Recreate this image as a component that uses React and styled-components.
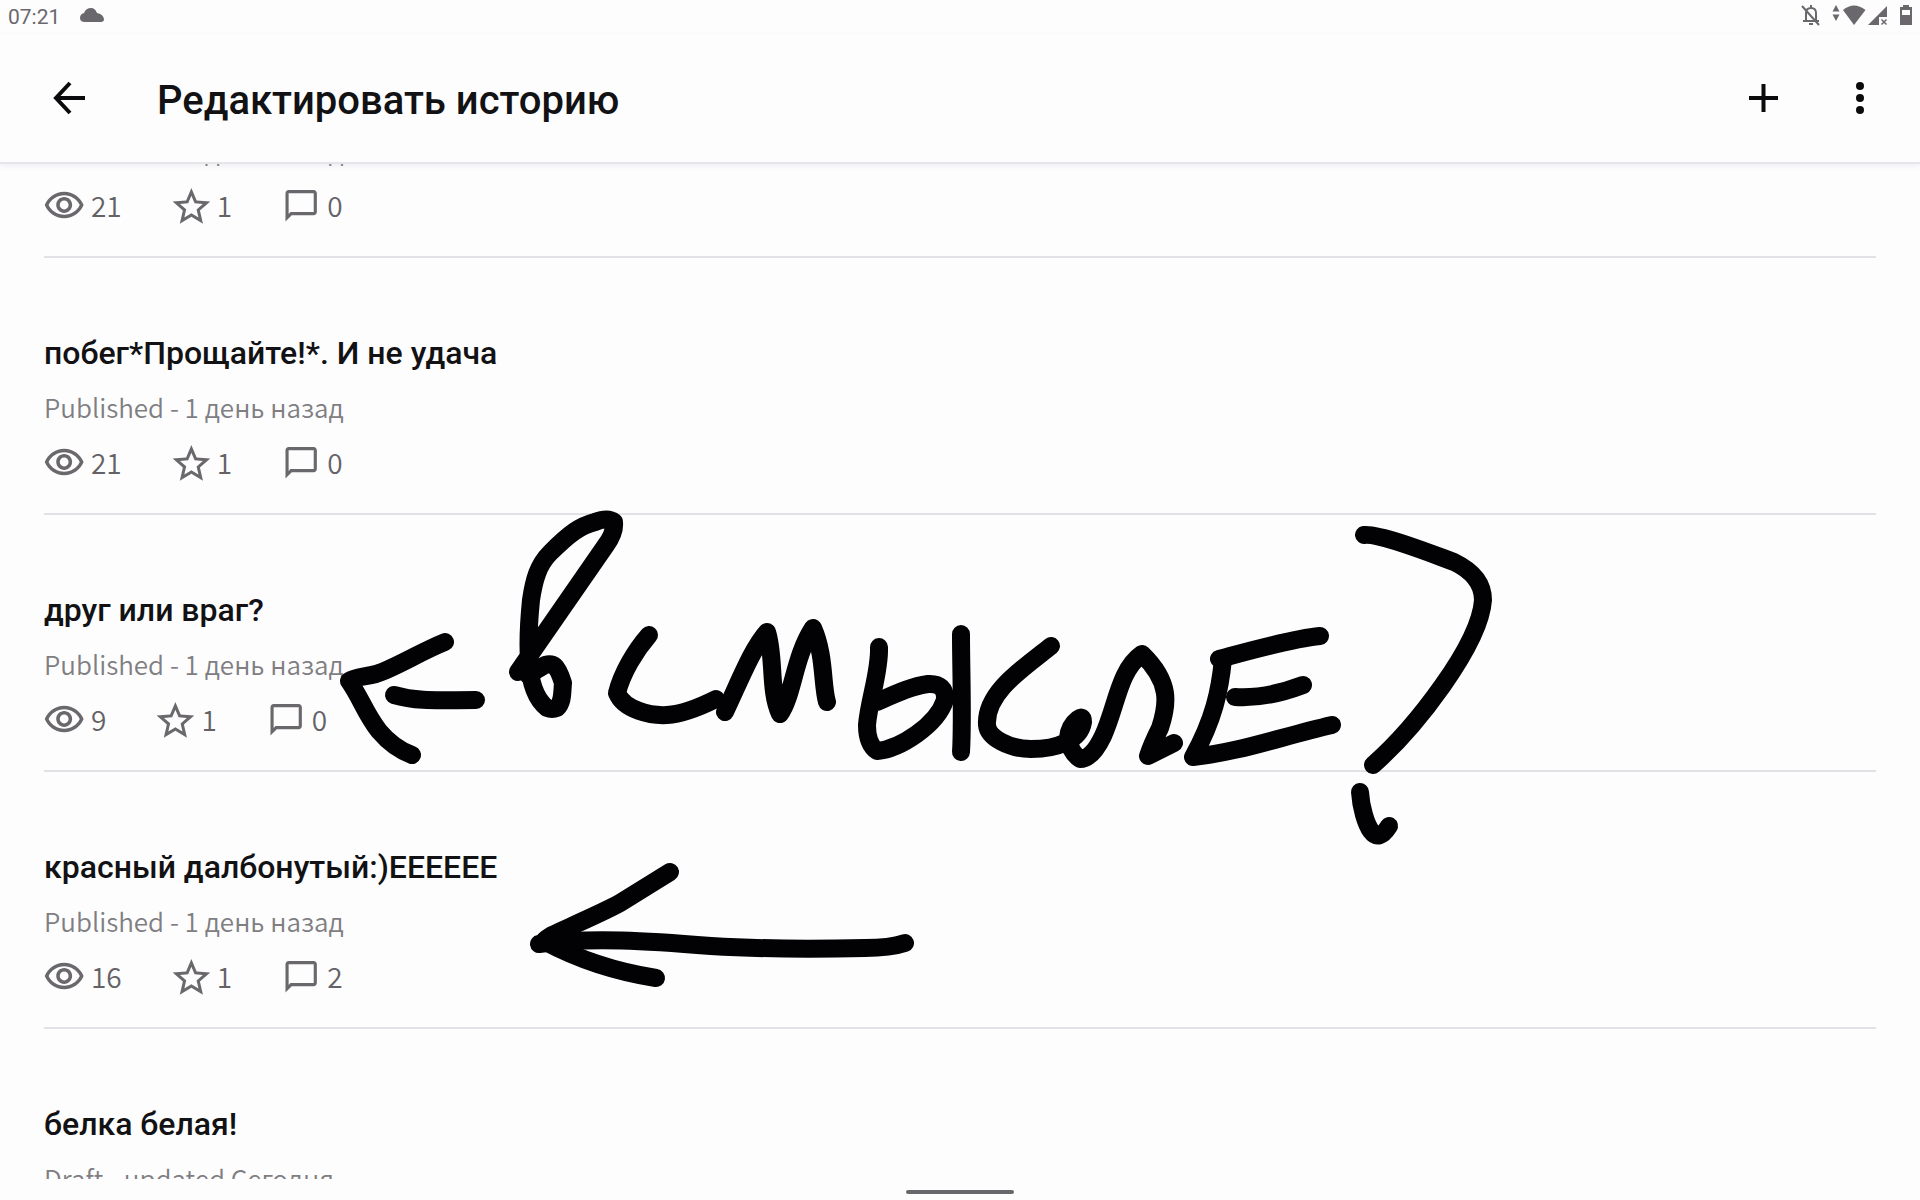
import React from 'react';
import styled, { createGlobalStyle } from 'styled-components';

const GlobalStyle = createGlobalStyle`
    * {
        box-sizing: border-box;
    }

    body {
        margin: 0;
        background: #fdfdfe;
        color: #121214;
        font-family: Roboto, sans-serif;
    }
`

const Screen = styled.div`
    position: relative;
    height: 100vh;
    display: flex;
    flex-direction: column;
    overflow: hidden;
`

const StatusBar = styled.div`
    display: flex;
    align-items: center;
    height: 34px;
    flex-shrink: 0;
    padding: 0 6px 0 8px;
    font-size: 21px;
    color: #6a686c;
`

const Cloud = styled.svg`
    width: 24px;
    height: 16px;
    margin-left: 20px;
    margin-bottom: 4px;
    fill: #6a686c;
`

const StatusIcons = styled.svg`
    width: 114px;
    height: 34px;
    margin-left: auto;
    fill: #6a686c;
`

const Header = styled.header`
    display: flex;
    align-items: center;
    height: 130px;
    flex-shrink: 0;
    padding: 0 36px 0 44px;
    border-bottom: 2px solid #e6e5ea;
    box-shadow: 0 2px 6px #eeedf2;
`

const HeaderTitle = styled.h1`
    flex: 1;
    margin: 0 0 0 65px;
    padding-top: 6px;
    font-size: 40px;
    line-height: 48px;
    font-weight: 500;
`

const IconButton = styled.button`
    display: flex;
    align-items: center;
    justify-content: center;
    width: 48px;
    height: 48px;
    margin-left: ${props => props.$gap || 0}px;
    padding: 0;
    border: 0;
    background: none;
    color: #0b0b0d;
`

const List = styled.main`
    flex: 1;
    min-height: 0;
    display: flex;
    flex-direction: column;
    overflow: hidden;
    padding: 0 44px;
`

const Part = styled.article`
    display: flex;
    flex-direction: column;
    justify-content: flex-end;
    flex-shrink: 0;
    height: ${props => props.$height || 257}px;
    padding-bottom: 31px;
    border-bottom: 2px solid #e2e1e5;
`

const PartTitle = styled.h2`
    margin: 0;
    font-size: 32px;
    line-height: 40px;
    font-weight: 500;
`

const PartStatus = styled.p`
    margin: 14px 0 0;
    font-family: "Noto Sans CJK SC", sans-serif;
    font-size: 26px;
    line-height: 40px;
    font-weight: 350;
    color: #807e82;
`

const Stats = styled.div`
    display: flex;
    gap: 48px;
    margin-top: 15px;
    font-family: "Noto Sans CJK SC", sans-serif;
    font-size: 28px;
    line-height: 40px;
    font-weight: 350;
    color: #646266;
`

const Stat = styled.span`
    display: flex;
    align-items: center;
    gap: 7px;
`

const StatIcon = styled.svg`
    width: 40px;
    height: 38px;
    fill: #6a686c;
`

const Navigation = styled.footer`
    display: flex;
    justify-content: center;
    align-items: center;
    height: 21px;
    flex-shrink: 0;
    padding-top: 4px;
`

const Handle = styled.div`
    width: 108px;
    height: 4px;
    border-radius: 2px;
    background: #69676b;
`

// freehand layer lies over the list
const Doodle = styled.svg`
    position: absolute;
    top: 0;
    left: 0;
    width: 1920px;
    height: 1200px;
    pointer-events: none;
    fill: none;
    stroke: #020103;
    stroke-width: 18;
    stroke-linecap: round;
    stroke-linejoin: round;
`

// the first and the last part are scrolled half out of the list
const parts = [
    { id: 1, status: 'Published - 1 день назад', stats: [21, 1, 0], height: 94 },
    { id: 2, title: 'побег*Прощайте!*. И не удача', status: 'Published - 1 день назад', stats: [21, 1, 0] },
    { id: 3, title: 'друг или враг?', status: 'Published - 1 день назад', stats: [9, 1, 0] },
    { id: 4, title: 'красный далбонутый:)EEEEEE', status: 'Published - 1 день назад', stats: [16, 1, 2] },
    { id: 5, title: 'белка белая!', status: 'Draft - updated Сегодня', height: 202 },
]

const strokes = [
    // small arrow
    'M445 642 C420 652 395 668 376 674 C365 677 355 677 349 681 C362 700 365 713 379 731 C390 744 401 751 412 755',
    'M394 695 C418 702 440 700 476 700',
    // в
    'M518 672 L606 545 C616 531 614 525 614 522 Q608 517 595 522 C580 526 570 533 550 553 C538 565 534 580 531 600 C528 630 528 645 529 660 C530 686 537 700 547 708 Q552 710 557 708 C563 702 562 693 563 683 C557 664 553 663 545 665 L528 675',
    // с
    'M649 635 C635 651 622 673 617 693 C624 710 651 716 667 715 C683 714 700 707 716 699',
    // м
    'M725 712 C741 678 752 649 767 632 C775 657 769 690 780 714 C793 696 794 657 813 628 C825 655 822 685 827 702',
    // ы
    'M879 647 C880 672 869 700 867 725 Q867 744 877 751 C900 749 937 725 945 700 Q946 683 928 684 C912 686 895 694 877 702',
    'M961 634 C961 670 963 720 961 752',
    // с, л
    'M1051 646 C1022 669 985 693 987 725 C988 738 1010 749 1031 749 C1058 749 1080 740 1083 722 Q1083 715 1078 719 Q1069 726 1068 738 Q1070 752 1080 759 Q1092 759 1103 736 C1117 705 1119 670 1142 654 C1171 682 1168 704 1160 728 Q1152 744 1148 756 L1174 743',
    // е
    'M1219 659 C1245 652 1290 639 1320 636',
    'M1223 659 C1220 690 1214 719 1193 757 C1240 752 1280 737 1332 725',
    'M1235 697 Q1266 699 1303 685',
    // ?
    'M1364 535 C1380 533 1440 557 1454 562 Q1483 576 1483 600 C1480 645 1415 728 1373 765',
    'M1360 792 C1361 808 1366 824 1371 831 Q1379 842 1389 826',
    // long arrow
    'M670 872 L620 903 C600 914 562 930 552 935 L546 939',
    'M539 944 C590 937 650 941 711 946 C760 949 820 949 865 948 Q890 948 905 943',
    'M544 941 C570 955 605 970 656 978',
]

const Eye = () => (
    <StatIcon viewBox="0.6 0.75 22.6 21.5">
        <path d="M12 6c3.79 0 7.17 2.13 8.82 5.5C19.17 14.87 15.79 17 12 17s-7.17-2.13-8.82-5.5C4.83 8.13 8.21 6 12 6m0-2C7 4 2.73 7.11 1 11.5 2.73 15.89 7 19 12 19s9.27-3.11 11-7.5C21.27 7.11 17 4 12 4zm0 5c1.38 0 2.5 1.12 2.5 2.5S13.38 14 12 14s-2.5-1.12-2.5-2.5S10.62 9 12 9m0-2c-2.48 0-4.5 2.02-4.5 4.5S9.52 16 12 16s4.5-2.02 4.5-4.5S14.48 7 12 7z" />
    </StatIcon>
)

const Star = () => (
    <StatIcon viewBox="0.6 0.93 21.33 20.27">
        <path d="M22 9.24l-7.19-.62L12 2 9.19 8.63 2 9.24l5.46 4.73L5.82 21 12 17.27 18.18 21l-1.63-7.03L22 9.24zM12 15.4l-3.76 2.27 1-4.28-3.32-2.88 4.38-.38L12 6.1l1.71 4.04 4.38.38-3.32 2.88 1 4.28L12 15.4z" />
    </StatIcon>
)

const Comment = () => (
    <StatIcon viewBox="-1.5 -0.6 25.5 24.2">
        <path d="M20 2H4c-1.1 0-2 .9-2 2v18l4-4h14c1.1 0 2-.9 2-2V4c0-1.1-.9-2-2-2zm0 14H5.17L4 17.17V4h16v12z" />
    </StatIcon>
)

const PartRow = ({ part }) => (
    <Part $height={part.height}>
        {part.title && <PartTitle>{part.title}</PartTitle>}
        <PartStatus>{part.status}</PartStatus>
        {part.stats && (
            <Stats>
                <Stat><Eye />{part.stats[0]}</Stat>
                <Stat><Star />{part.stats[1]}</Stat>
                <Stat><Comment />{part.stats[2]}</Stat>
            </Stats>
        )}
    </Part>
)

class App extends React.Component {
    render() {
        return (
            <Screen>
                <GlobalStyle />
                <StatusBar>
                    <span>07:21</span>
                    <Cloud viewBox="0 0 24 16">
                        <path d="M5 15 Q0 15 0 11 Q0 7 4 6 Q6 1 11 1 Q15 1 17 6 Q23 7 24 12 Q24 15 21 15 Z" />
                    </Cloud>
                    <StatusIcons viewBox="1800 0 114 34">
                        {/* bell off */}
                        <path
                            d="M1806 20 V13 Q1806 8 1811 8 Q1816 8 1816 13 V20 M1803 21 H1819 M1811 5 V8 M1809 24 H1813 M1802 6 L1819 25"
                            fill="none"
                            stroke="#6a686c"
                            strokeWidth="2"
                        />
                        <path d="M1836 5 L1839.5 11.5 H1832.5 Z M1832.5 14.5 H1839.5 L1836 21 Z" />
                        <path d="M1843 10 Q1854 1 1865.5 10 L1854 25 Z" />
                        <path d="M1887 6 V17 H1879 V25 H1868 Z" />
                        <path d="M1881.5 19.5 L1886.5 24.5 M1886.5 19.5 L1881.5 24.5" stroke="#6a686c" strokeWidth="1.5" />
                        <path fillRule="evenodd" d="M1903 7 V5 H1909 V7 H1912 V25 H1900 V7 Z M1902 10 V15 H1910 V10 Z" />
                    </StatusIcons>
                </StatusBar>
                <Header>
                    <IconButton aria-label="Назад">
                        <svg width="48" height="48" viewBox="0 0 48 48" fill="none" stroke="currentColor" strokeWidth="4">
                            <path d="M41 24 H12 M26 9 L12 24 L26 39" />
                        </svg>
                    </IconButton>
                    <HeaderTitle>Редактировать историю</HeaderTitle>
                    <IconButton aria-label="Добавить">
                        <svg width="48" height="48" viewBox="0 0 48 48" fill="none" stroke="currentColor" strokeWidth="4">
                            <path d="M23.5 10 V38 M9 24 H38" />
                        </svg>
                    </IconButton>
                    <IconButton $gap={48} aria-label="Ещё">
                        <svg width="48" height="48" viewBox="0 0 48 48" fill="currentColor">
                            <circle cx="24" cy="12" r="4" />
                            <circle cx="24" cy="24" r="4" />
                            <circle cx="24" cy="36" r="4" />
                        </svg>
                    </IconButton>
                </Header>
                <List>
                    {parts.map(part => <PartRow key={part.id} part={part} />)}
                </List>
                <Navigation>
                    <Handle />
                </Navigation>
                <Doodle viewBox="0 0 1920 1200" aria-hidden="true">
                    {strokes.map(d => <path key={d} d={d} />)}
                </Doodle>
            </Screen>
        )
    }
}

export default App;
